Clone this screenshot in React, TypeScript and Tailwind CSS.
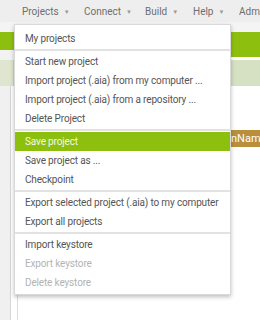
import React from 'react'

const navItems = [
  { label: 'Projects', w: 'w-[62px]' },
  { label: 'Connect', w: 'w-[61px]' },
  { label: 'Build', w: 'w-[48px]' },
  { label: 'Help', w: 'w-[46px]' },
]

type Item = { label: string; active?: boolean; disabled?: boolean }

const sections: Item[][] = [
  [{ label: 'My projects' }],
  [
    { label: 'Start new project' },
    { label: 'Import project (.aia) from my computer ...' },
    { label: 'Import project (.aia) from a repository ...' },
    { label: 'Delete Project' },
  ],
  [
    { label: 'Save project', active: true },
    { label: 'Save project as ...' },
    { label: 'Checkpoint' },
  ],
  [
    { label: 'Export selected project (.aia) to my computer' },
    { label: 'Export all projects' },
  ],
  [
    { label: 'Import keystore' },
    { label: 'Export keystore', disabled: true },
    { label: 'Delete keystore', disabled: true },
  ],
]

export default function App() {
  return (
    <div
      className="relative w-[260px] h-[320px] overflow-hidden bg-white"
      style={{ fontFamily: 'Roboto, "Liberation Sans", sans-serif' }}
    >
      {/* Top menu bar */}
      <div className="flex items-center h-[22px] bg-[#eeeeee] pl-[22px] text-[10px] text-[#6e6e6e] whitespace-nowrap">
        {navItems.map((n) => (
          <div key={n.label} className={`flex items-center gap-[5px] shrink-0 ${n.w}`}>
            <span>{n.label}</span>
            <span className="text-[6px] text-[#999]">▼</span>
          </div>
        ))}
        <span>Admin</span>
      </div>
      <div className="h-[10px] bg-[#f4f4f4]" />

      {/* Green toolbar */}
      <div className="h-[18px] bg-[#8dbf0f]" />
      <div className="flex h-[10px]">
        <div className="w-[230px] bg-[#f2f2f2]" />
        <div className="flex-1 bg-[#8dbf0f] h-[7px]" />
      </div>

      {/* Tab strip */}
      <div className="flex h-[26px]">
        <div className="w-[14px] bg-[#dfe6cf] border-r border-[#cfd8bd]" />
        <div className="flex-1 bg-[#d6e0c2]" />
      </div>

      {/* Workspace */}
      <div className="flex h-[234px]">
        <div className="w-[11px] bg-[#f0f0f0] border-r border-[#d6d6d6]" />
        <div className="w-[7px] border-r border-[#dcdcdc]" />
        <div className="flex-1 flex flex-col pt-[44px]">
          <div className="flex justify-end">
            <div className="w-[31px] h-[17px] bg-[#b98f3c] text-white text-[11px] leading-[17px] pl-[2px] overflow-hidden whitespace-nowrap">
              nName
            </div>
          </div>
        </div>
      </div>

      {/* Projects dropdown */}
      <div className="absolute left-[14px] top-[24px] w-[217px] bg-white border border-[#d9d9d9] shadow-[0_2px_4px_rgba(0,0,0,0.25)] pt-[4px] pb-[2px]">
        {sections.map((sec, i) => (
          <div key={i}>
            {i > 0 && <div className="mt-[1px] mb-[1px] h-[2px] bg-[#e2e2e2]" />}
            {sec.map((it) => (
              <div
                key={it.label}
                className={`h-[19px] flex items-center pl-[10px] text-[10px] tracking-[-0.15px] whitespace-nowrap ${
                  it.active
                    ? 'bg-[#8dbf0f] text-[#f3f9e4]'
                    : it.disabled
                    ? 'text-[#b3b3b3]'
                    : 'text-[#555]'
                }`}
              >
                {it.label}
              </div>
            ))}
          </div>
        ))}
      </div>
    </div>
  )
}
